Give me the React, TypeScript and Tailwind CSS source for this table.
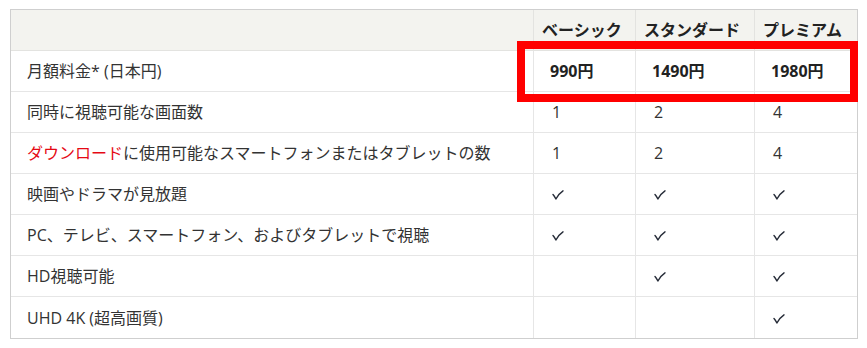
import React from "react";

type Cell = string | boolean | null;

interface Row {
  label: React.ReactNode;
  values: [Cell, Cell, Cell];
  bold?: boolean;
}

const plans = ["ベーシック", "スタンダード", "プレミアム"];

const rows: Row[] = [
  { label: "月額料金* (日本円)", values: ["990円", "1490円", "1980円"], bold: true },
  { label: "同時に視聴可能な画面数", values: ["1", "2", "4"] },
  {
    label: (
      <>
        <span className="text-[#e50914]">ダウンロード</span>
        に使用可能なスマートフォンまたはタブレットの数
      </>
    ),
    values: ["1", "2", "4"],
  },
  { label: "映画やドラマが見放題", values: [true, true, true] },
  { label: "PC、テレビ、スマートフォン、およびタブレットで視聴", values: [true, true, true] },
  { label: "HD視聴可能", values: [null, true, true] },
  { label: "UHD 4K (超高画質)", values: [null, null, true] },
];

function Check() {
  return (
    <svg width="12" height="10" viewBox="0 0 12 10" fill="none" className="block mt-[2px]">
      <path
        d="M1 4.4 C2.2 5.6 3 7.2 3.9 9 C5.6 5.6 8 2.8 11 0.8"
        stroke="#262c38"
        strokeWidth="1.4"
        strokeLinecap="round"
        strokeLinejoin="round"
      />
    </svg>
  );
}

const colBorder = ["border-r", "border-r", "border-r", ""];

export default function App() {
  return (
    <div
      className="w-[867px] h-[348px] bg-white pl-[10px] pt-[9px]"
      style={{ fontFamily: '"Open Sans", "Noto Sans CJK JP", sans-serif' }}
    >
      <div className="relative w-[848px]">
        <div className="grid grid-cols-[523px_102px_119px_102px] border border-[#cfcfcf] text-[16px] text-[#333]">
          {/* header row */}
          <div className="h-[41px] bg-[#f3f3ef] border-b border-r border-[#e3e3e0]" />
          {plans.map((p, i) => (
            <div
              key={p}
              className={`h-[41px] bg-[#f3f3ef] border-b border-[#e3e3e0] ${colBorder[i + 1]} flex items-center pl-[8px] font-bold text-[#222] whitespace-nowrap`}
            >
              {p}
            </div>
          ))}

          {rows.map((row, r) => {
            const last = r === rows.length - 1;
            const bb = last ? "" : "border-b";
            return (
              <React.Fragment key={r}>
                <div
                  className={`h-[41px] ${bb} border-r border-[#e6e6e6] flex items-center pl-[16px] whitespace-nowrap`}
                >
                  {row.label}
                </div>
                {row.values.map((v, c) => (
                  <div
                    key={c}
                    className={`h-[41px] ${bb} ${colBorder[c + 1]} border-[#e6e6e6] flex items-center ${
                      row.bold ? "pl-[16px] font-bold text-[#222]" : "pl-[18px]"
                    }`}
                  >
                    {v === true ? <Check /> : typeof v === "string" ? v : null}
                  </div>
                ))}
              </React.Fragment>
            );
          })}
        </div>

        {/* highlight around the price row */}
        <div className="absolute left-[507px] top-[32px] w-[341px] h-[61px] border-[8px] border-[#ff0000] pointer-events-none" />
      </div>
    </div>
  );
}
